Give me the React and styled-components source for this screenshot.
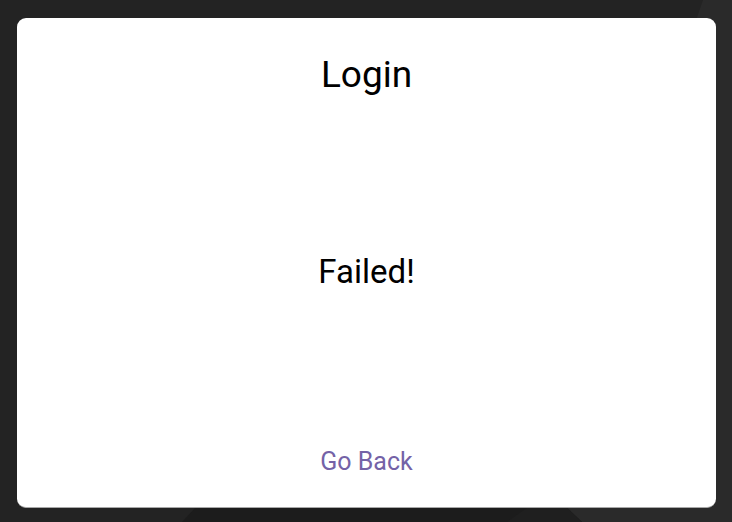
import React from "react";
import styled, { createGlobalStyle } from "styled-components";

const Global = createGlobalStyle`
  html, body { margin: 0; padding: 0; background: #232323; }
  body { font-family: Roboto, "Noto Sans", "Liberation Sans", sans-serif; }
  * { box-sizing: border-box; }
`;

const Screen = styled.div`
  position: relative;
  width: 732px;
  height: 522px;
  overflow: hidden;
  background: #232323;
  padding: 18px 16px 14px 17px;
  display: flex;
`;

const Backdrop = styled.svg`
  position: absolute;
  inset: 0;
  width: 732px;
  height: 522px;
  z-index: 0;
`;

const Card = styled.div`
  position: relative;
  z-index: 1;
  flex: 1;
  background: #ffffff;
  border-radius: 9px;
  border-bottom: 1px solid #a8a8a8;
  display: flex;
  flex-direction: column;
  align-items: center;
  justify-content: space-between;
  padding: 38px 0 33px;
`;

const Title = styled.h1`
  margin: 0;
  font-size: 37px;
  line-height: 1;
  font-weight: 400;
  color: #000;
`;

const Message = styled.p`
  margin: 0;
  font-size: 33px;
  line-height: 1;
  font-weight: 400;
  color: #000;
`;

const TextButton = styled.button`
  border: none;
  background: transparent;
  padding: 0;
  margin: 0;
  font-family: inherit;
  font-size: 25px;
  line-height: 1;
  font-weight: 400;
  color: #7462a7;
  cursor: pointer;
`;

export default function App() {
  return (
    <>
      <Global />
      <Screen>
        <Backdrop viewBox="0 0 732 522" aria-hidden="true">
          <rect width="732" height="522" fill="#232323" />
          <polygon points="703,0 732,0 732,522 582,522 566,507 600,300" fill="#2a2a2a" />
          <polygon points="196,507 566,507 582,522 182,522" fill="#1c1c1c" />
          <polygon points="528,507 566,507 582,522 507,522" fill="#1f1f1f" />
        </Backdrop>
        <Card>
          <Title>Login</Title>
          <Message>Failed!</Message>
          <TextButton>Go Back</TextButton>
        </Card>
      </Screen>
    </>
  );
}
